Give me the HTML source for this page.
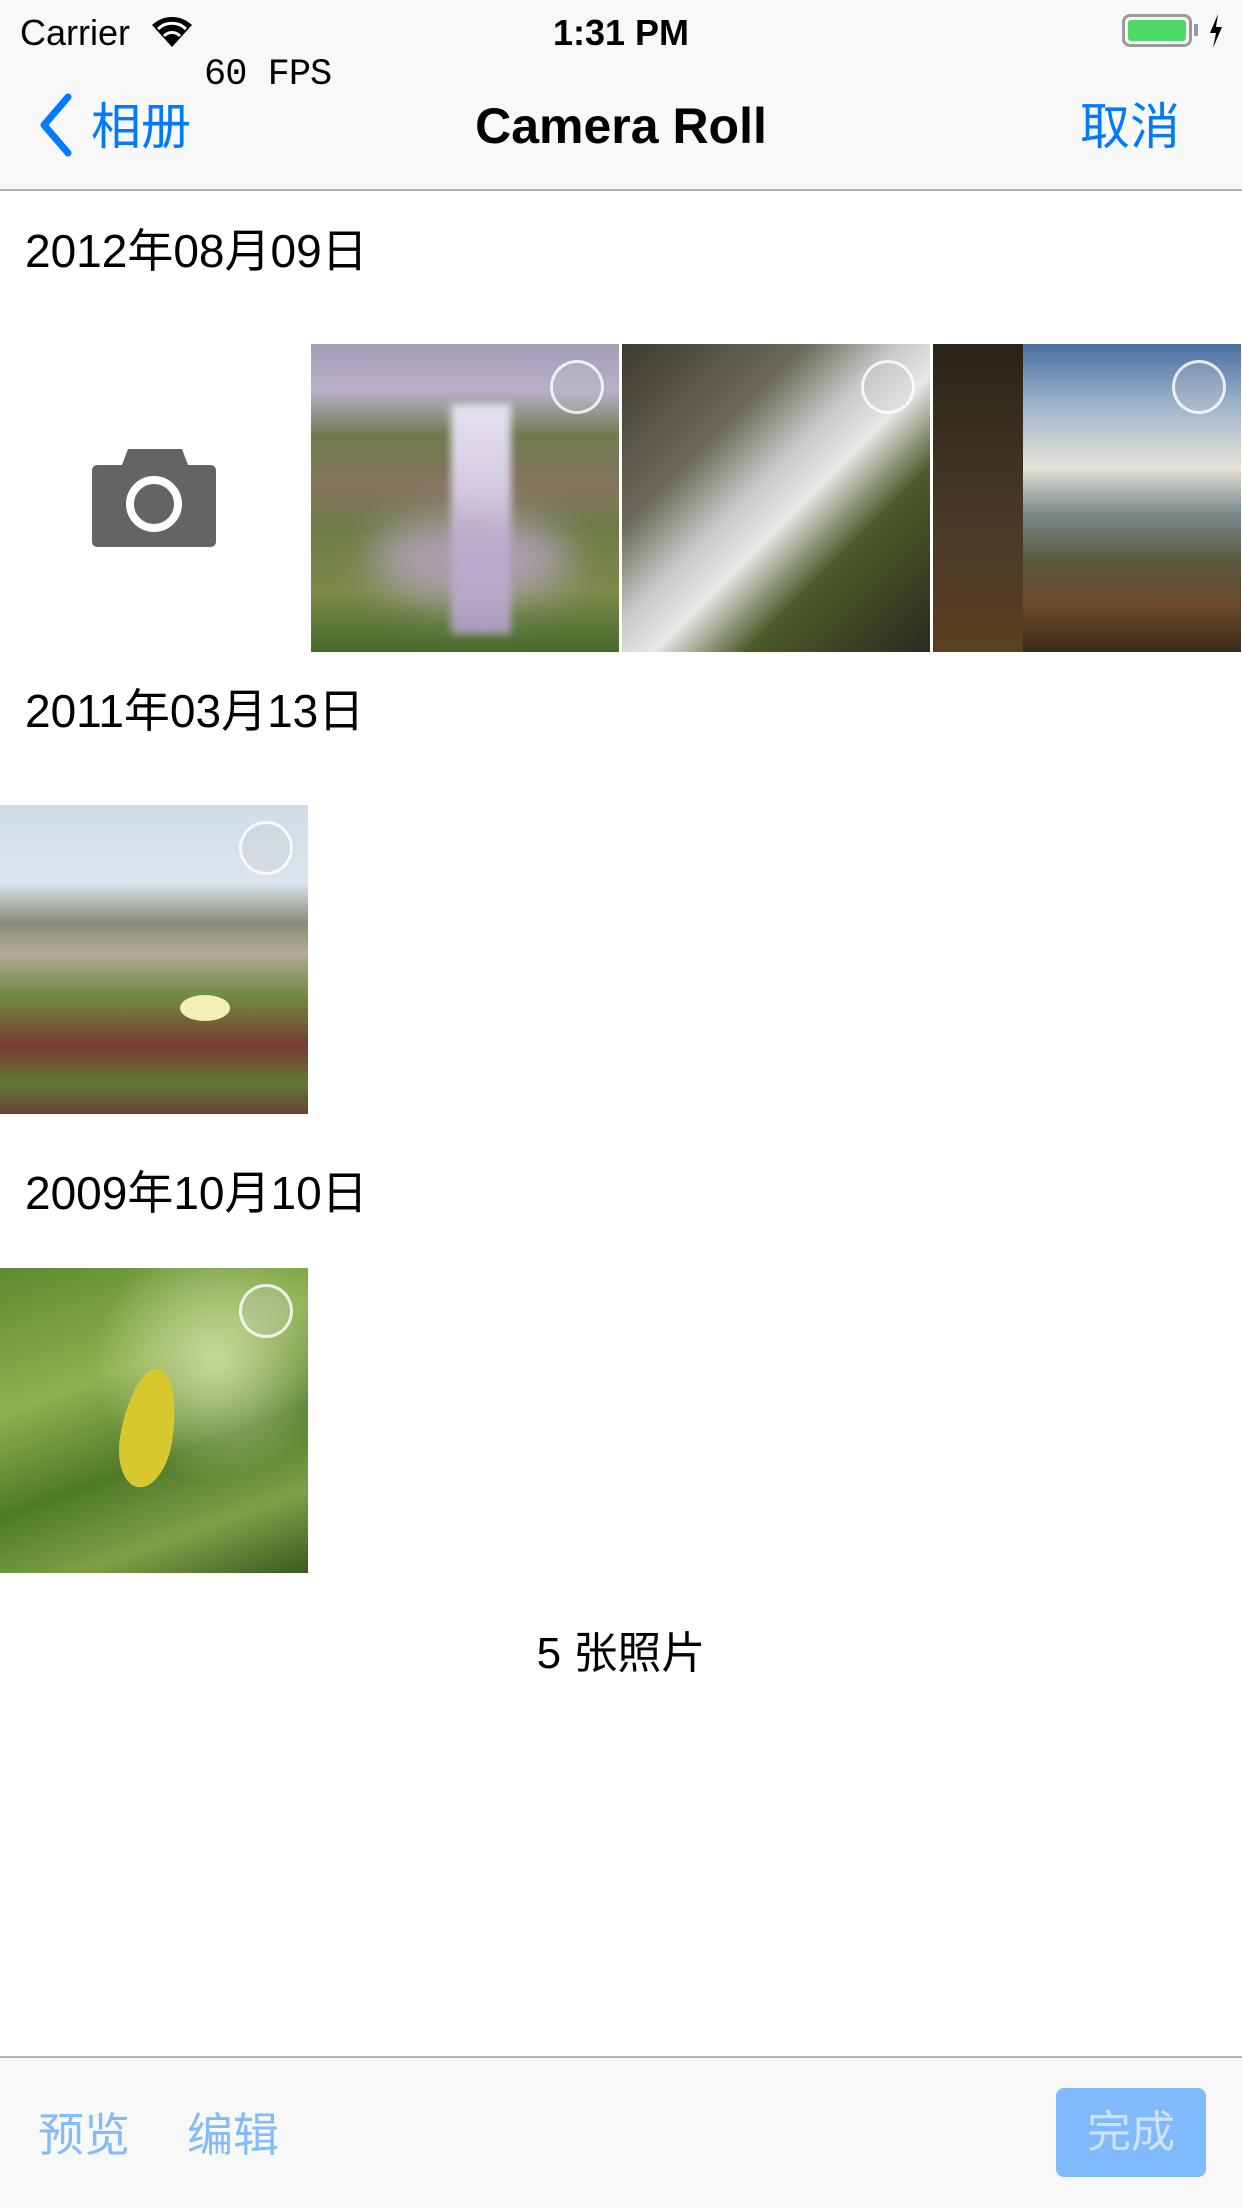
<!DOCTYPE html>
<html><head><meta charset="utf-8">
<style>
*{margin:0;padding:0;box-sizing:border-box}
body{width:1242px;height:2208px;background:#fff;position:relative;overflow:hidden;font-family:"Liberation Sans","Noto Sans CJK SC",sans-serif;}
.abs{position:absolute}
.top{left:0;top:0;width:1242px;height:191px;background:#f8f8f8;border-bottom:2px solid #b2b2b2}
.date{left:25px;font-size:46px;color:#000;line-height:1;white-space:nowrap}
.cell{position:absolute;width:308px;height:308px;overflow:hidden}
.sel{position:absolute;right:15px;top:16px;width:54px;height:54px;border-radius:50%;border:3px solid rgba(255,255,255,.8);background:rgba(200,200,200,.25)}
</style></head><body>
<div class="abs top"></div>
<div class="abs" style="left:20px;top:12px;font-size:36px;">Carrier</div>
<svg class="abs" style="left:150px;top:14px" width="44" height="34" viewBox="0 0 44 34"><path d="M22 33 L2 11 A29 29 0 0 1 42 11 Z" fill="#000"/><path d="M8 15 A20 20 0 0 1 36 15" stroke="#f8f8f8" stroke-width="3" fill="none"/><path d="M14 22 A11 11 0 0 1 30 22" stroke="#f8f8f8" stroke-width="3" fill="none"/></svg>
<div class="abs" style="left:0;width:1242px;text-align:center;top:12px;font-size:36px;font-weight:600;">1:31 PM</div>
<div class="abs" style="left:1122px;top:14px;width:70px;height:33px;border:3px solid #9a9a9a;border-radius:8px;padding:3px"><div style="width:100%;height:100%;background:#4cd964;border-radius:3px"></div></div>
<div class="abs" style="left:1194px;top:24px;width:4px;height:12px;background:#9a9a9a"></div>
<svg class="abs" style="left:1208px;top:14px" width="16" height="34" viewBox="0 0 16 34"><path d="M10 0 L2 19 L8 19 L5 34 L14 13 L8 13 Z" fill="#000"/></svg>
<div class="abs" style="left:204px;top:54px;font-family:'Liberation Mono',monospace;font-size:37px;letter-spacing:-1px">60 FPS</div>
<svg class="abs" style="left:36px;top:93px" width="40" height="64" viewBox="0 0 40 64"><path d="M32 4 L8 32 L32 60" stroke="#007aff" stroke-width="7" fill="none" stroke-linecap="round" stroke-linejoin="round"/></svg>
<div class="abs" style="left:91px;top:87px;font-size:50px;color:#007aff">相册</div>
<div class="abs" style="left:0;width:1242px;text-align:center;top:97px;font-size:50px;font-weight:bold;">Camera Roll</div>
<div class="abs" style="left:1080px;top:87px;font-size:50px;color:#007aff">取消</div>

<div class="abs date" style="top:228px">2012年08月09日</div>
<div class="cell" style="left:0;top:344px;background:#fff">
<svg class="abs" style="left:92px;top:105px" width="124" height="98" viewBox="0 0 124 98"><path d="M30 16 L36 0 L90 0 L96 16 L118 16 Q124 16 124 22 L124 92 Q124 98 118 98 L6 98 Q0 98 0 92 L0 22 Q0 16 6 16 Z" fill="#646464"/><circle cx="62" cy="55" r="24" fill="none" stroke="#fff" stroke-width="8"/></svg>
</div>
<div class="cell" style="left:311px;top:344px;background:linear-gradient(180deg,#a59db8 0%,#b8b0c8 15%,#6f7a4e 30%,#85745f 45%,#6d7a45 60%,#7d8a4a 80%,#456b2a 100%)">
<div class="abs" style="left:140px;top:60px;width:60px;height:230px;background:linear-gradient(180deg,#e5e0ee,#c9bfd9 60%,#a89ab8);filter:blur(4px)"></div>
<div class="abs" style="left:60px;top:170px;width:200px;height:90px;background:#b7a6c6;border-radius:50%;filter:blur(20px);opacity:.8"></div>
<div class="sel"></div></div>
<div class="cell" style="left:622px;top:344px;background:linear-gradient(135deg,#3d3a2f 0%,#6b6a5a 30%,#c8c8c8 45%,#e8e8e8 55%,#4c5a28 70%,#2a2a20 100%)"><div class="sel"></div></div>
<div class="cell" style="left:933px;top:344px;background:linear-gradient(180deg,#4a6fa0 0%,#9fb5cc 20%,#e6e2d8 40%,#7a8a8c 55%,#5a5a40 70%,#6b4a2a 85%,#3a2a1a 100%)">
<div class="abs" style="left:0;top:0;width:90px;height:308px;background:linear-gradient(180deg,#2a2418,#4a3a28 60%,#5a4020);"></div>
<div class="sel"></div></div>

<div class="abs date" style="top:688px">2011年03月13日</div>
<div class="cell" style="left:0;top:805px;height:309px;background:linear-gradient(180deg,#cfdbe8 0%,#dce5ee 25%,#8a8c78 38%,#b5aa98 48%,#6f8a40 62%,#7a3a35 78%,#5f7a35 90%,#6a4030 100%)">
<div class="abs" style="left:180px;top:190px;width:50px;height:26px;background:#f3efb8;border-radius:50%"></div>
<div class="sel" style="top:16px"></div></div>

<div class="abs date" style="top:1170px">2009年10月10日</div>
<div class="cell" style="left:0;top:1268px;height:305px;background:radial-gradient(circle at 70% 30%,#c6d89a,transparent 40%),linear-gradient(160deg,#5e8a30 0%,#8fb050 35%,#4e7a28 60%,#7ea048 80%,#3a5a20 100%)">
<div class="abs" style="left:122px;top:100px;width:52px;height:120px;background:#d8c830;border-radius:50% 50% 50% 50%/60% 60% 40% 40%;transform:rotate(10deg)"></div>
<div class="sel"></div></div>

<div class="abs" style="left:0;width:1242px;text-align:center;top:1617px;font-size:44px">5 张照片</div>

<div class="abs" style="left:0;top:2056px;width:1242px;height:152px;background:#f8f8f8;border-top:2px solid #b2b2b2"></div>
<div class="abs" style="left:38px;top:2099px;font-size:46px;color:#84bbf9">预览</div>
<div class="abs" style="left:187px;top:2099px;font-size:46px;color:#84bbf9">编辑</div>
<div class="abs" style="left:1056px;top:2088px;width:150px;height:89px;background:#80bafc;border-radius:8px;color:#cfe2f7;font-size:44px;text-align:center;line-height:89px">完成</div>
</body></html>
